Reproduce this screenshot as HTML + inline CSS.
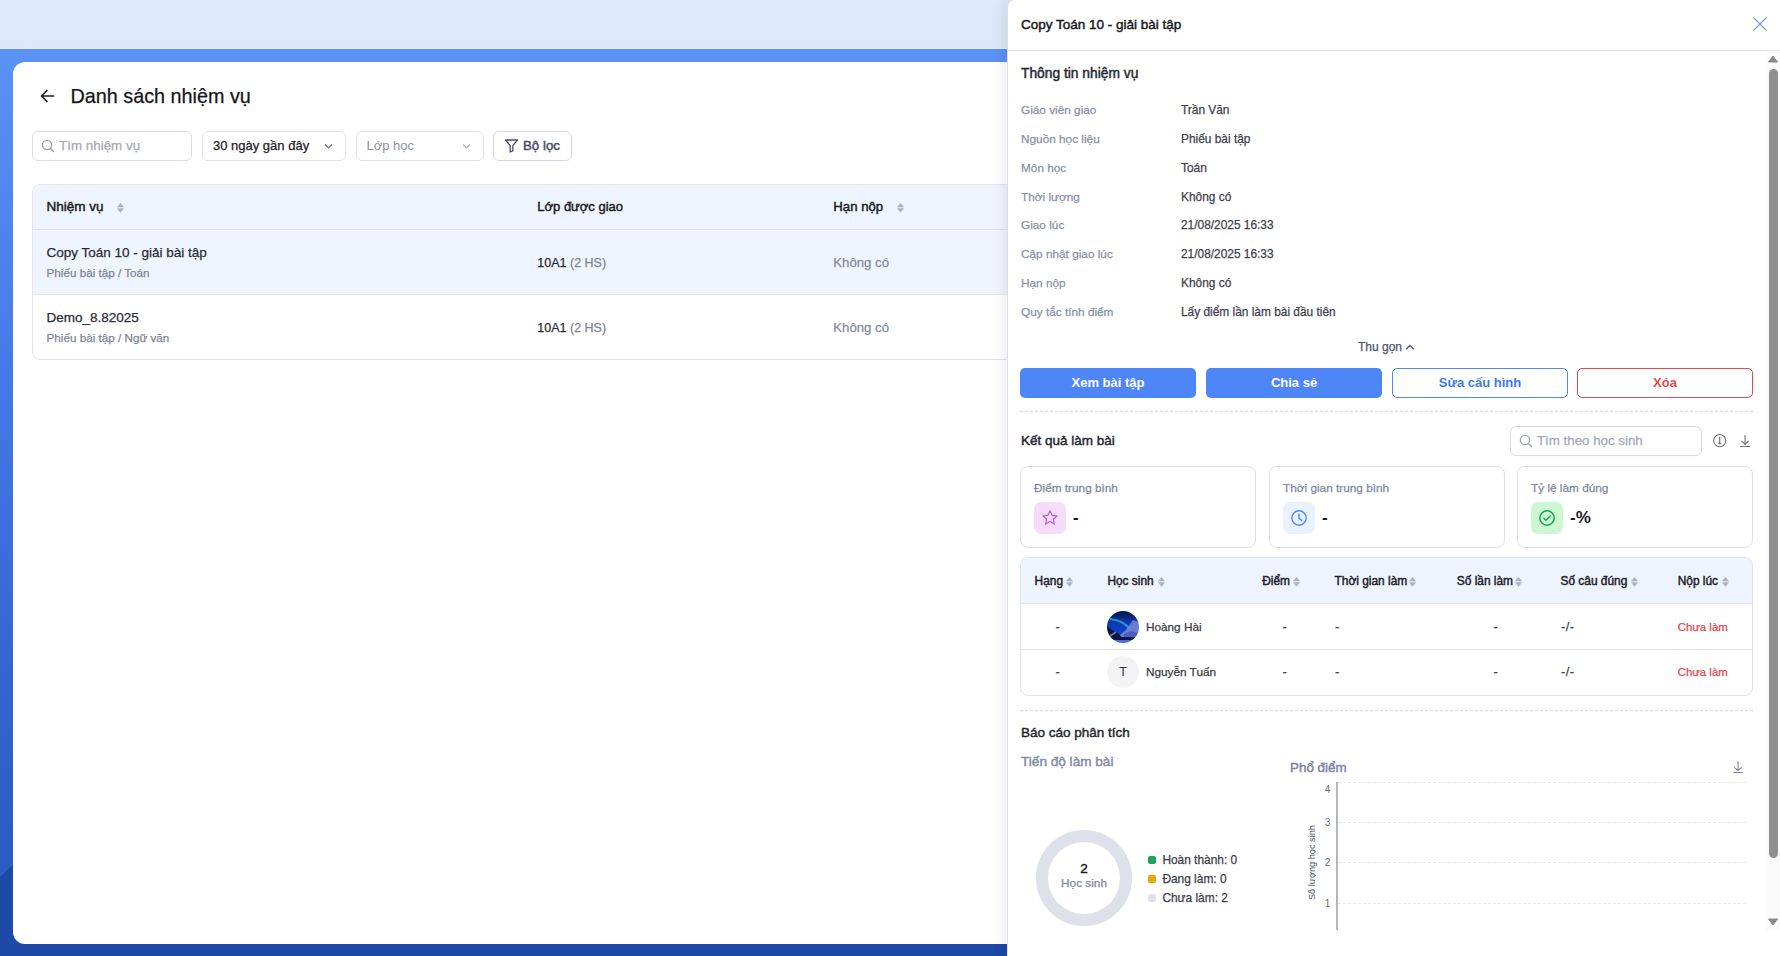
<!DOCTYPE html>
<html><head><meta charset="utf-8">
<style>
*{box-sizing:border-box;margin:0;padding:0}
html,body{width:1780px;height:956px;overflow:hidden;font-family:"Liberation Sans",sans-serif}
body{position:relative;background:#fff}
.abs{position:absolute}
.t{position:absolute;white-space:nowrap;line-height:1}
svg{display:block}
</style></head><body>
<div class="abs" style="left:0px;top:0px;width:1780px;height:49px;background:#dde8fb"></div>
<div class="abs" style="left:0px;top:48px;width:1780px;height:1px;background:#e4ecfb"></div>
<div class="abs" style="left:0px;top:49px;width:1780px;height:907px;background:linear-gradient(180deg,#5b92f6 0%,#4c80ea 25%,#3c6dd8 55%,#2f60c8 80%,#2a58bd 100%)"></div>
<svg class="abs" style="left:0;top:48px" width="1780" height="908"><path d="M0 829 L40 792 L1780 792 L1780 908 L0 908 Z" fill="#1d4aa7"/></svg>
<div class="abs" style="left:0px;top:944px;width:1780px;height:12px;background:#1c48a6"></div>
<div class="abs" style="left:13px;top:62px;width:1754px;height:882px;background:#fff;border-radius:12px"></div>
<svg class="abs" style="left:38px;top:88px" width="18" height="16" viewBox="0 0 18 16"><path d="M15.5 8H3.5M9 2.5L3.5 8L9 13.5" stroke="#1f2026" stroke-width="1.7" fill="none" stroke-linecap="round" stroke-linejoin="round"/></svg>
<div class="t" style="left:70.5px;top:87px;font-size:19.8px;color:#15161a;font-weight:400;-webkit-text-stroke:0.25px currentColor;">Danh sách nhiệm vụ</div>
<div class="abs" style="left:32px;top:131px;width:160px;height:30px;border:1px solid #d9dbe8;border-radius:6px;background:#fff"></div>
<svg class="abs" style="left:41px;top:139px" width="14" height="14" viewBox="0 0 14 14"><circle cx="6" cy="6" r="4.6" stroke="#9a9fb0" stroke-width="1.4" fill="none"/><path d="M9.4 9.4L12.6 12.6" stroke="#9a9fb0" stroke-width="1.4" stroke-linecap="round"/></svg>
<div class="t" style="left:59.0px;top:139px;font-size:13.4px;color:#a6a9b8;font-weight:400;-webkit-text-stroke:0.25px currentColor;">Tìm nhiệm vụ</div>
<div class="abs" style="left:202px;top:131px;width:144px;height:30px;border:1px solid #e2e3ea;border-radius:6px;background:#fff"></div>
<div class="t" style="left:213.0px;top:139px;font-size:13px;color:#1f2026;font-weight:400;-webkit-text-stroke:0.25px currentColor;">30 ngày gần đây</div>
<svg class="abs" style="left:324px;top:142px" width="9" height="8" viewBox="0 0 9 8"><path d="M1 2.5L4.5 6L8 2.5" stroke="#6b6f80" stroke-width="1.1" fill="none"/></svg>
<div class="abs" style="left:356px;top:131px;width:128px;height:30px;border:1px solid #e2e3ea;border-radius:6px;background:#fff"></div>
<div class="t" style="left:366.5px;top:139px;font-size:13px;color:#8d90a0;font-weight:400;">Lớp học</div>
<svg class="abs" style="left:462px;top:142px" width="9" height="8" viewBox="0 0 9 8"><path d="M1 2.5L4.5 6L8 2.5" stroke="#a9acb8" stroke-width="1.1" fill="none"/></svg>
<div class="abs" style="left:493px;top:131px;width:79px;height:30px;border:1px solid #d6d6e8;border-radius:6px;background:#fff"></div>
<svg class="abs" style="left:504px;top:138px" width="15" height="15" viewBox="0 0 15 15"><path d="M1.5 2H13.5L8.8 7.6V12.8L6.2 14V7.6Z" stroke="#4a4e66" stroke-width="1.3" fill="none" stroke-linejoin="round"/></svg>
<div class="t" style="left:523.0px;top:139px;font-size:13.3px;color:#474b66;font-weight:400;-webkit-text-stroke:0.45px currentColor;">Bộ lọc</div>
<div class="abs" style="left:32px;top:184px;width:1740px;height:176px;border:1px solid #e2e4ec;border-radius:8px;background:#fff;overflow:hidden"></div>
<div class="abs" style="left:33px;top:185px;width:1738px;height:44px;background:#eef5fe;border-radius:7px 7px 0 0"></div>
<div class="abs" style="left:33px;top:229px;width:1738px;height:1px;background:#dfe2ea"></div>
<div class="abs" style="left:33px;top:230px;width:1738px;height:64px;background:#eff5fe"></div>
<div class="abs" style="left:33px;top:294px;width:1738px;height:1px;background:#e2e4ec"></div>
<div class="t" style="left:46.5px;top:200px;font-size:13.5px;color:#1a1b22;font-weight:400;-webkit-text-stroke:0.45px currentColor;">Nhiệm vụ</div>
<svg class="abs" style="left:116.5px;top:202.6px" width="7" height="10" viewBox="0 0 7 10"><path d="M3.5 0.3L6.6 4.1H0.4z" fill="#adb3be" stroke="#adb3be" stroke-width="0.5" stroke-linejoin="round"/><path d="M3.5 9.4L6.6 5.6H0.4z" fill="#adb3be" stroke="#adb3be" stroke-width="0.5" stroke-linejoin="round"/></svg>
<div class="t" style="left:537.3px;top:200px;font-size:13px;color:#1a1b22;font-weight:400;-webkit-text-stroke:0.45px currentColor;">Lớp được giao</div>
<div class="t" style="left:833.3px;top:200px;font-size:13.2px;color:#1a1b22;font-weight:400;-webkit-text-stroke:0.45px currentColor;">Hạn nộp</div>
<svg class="abs" style="left:896.5px;top:202.6px" width="7" height="10" viewBox="0 0 7 10"><path d="M3.5 0.3L6.6 4.1H0.4z" fill="#adb3be" stroke="#adb3be" stroke-width="0.5" stroke-linejoin="round"/><path d="M3.5 9.4L6.6 5.6H0.4z" fill="#adb3be" stroke="#adb3be" stroke-width="0.5" stroke-linejoin="round"/></svg>
<div class="t" style="left:46.5px;top:246px;font-size:13.5px;color:#2b2c33;font-weight:400;-webkit-text-stroke:0.25px currentColor;">Copy Toán 10 - giải bài tập</div>
<div class="t" style="left:46.5px;top:267px;font-size:11.7px;color:#80859a;font-weight:400;-webkit-text-stroke:0.25px currentColor;">Phiếu bài tập / Toán</div>
<div class="t" style="left:537.3px;top:257px;font-size:12.5px;color:#2b2c33;font-weight:400;-webkit-text-stroke:0.25px currentColor;">10A1 <span style="color:#7f8398">(2 HS)</span></div>
<div class="t" style="left:833.3px;top:256px;font-size:13.2px;color:#858a9f;font-weight:400;-webkit-text-stroke:0.25px currentColor;">Không có</div>
<div class="t" style="left:46.5px;top:311px;font-size:13.5px;color:#2b2c33;font-weight:400;-webkit-text-stroke:0.25px currentColor;">Demo_8.82025</div>
<div class="t" style="left:46.5px;top:332px;font-size:11.7px;color:#80859a;font-weight:400;-webkit-text-stroke:0.25px currentColor;">Phiếu bài tập / Ngữ văn</div>
<div class="t" style="left:537.3px;top:322px;font-size:12.5px;color:#2b2c33;font-weight:400;-webkit-text-stroke:0.25px currentColor;">10A1 <span style="color:#7f8398">(2 HS)</span></div>
<div class="t" style="left:833.3px;top:321px;font-size:13.2px;color:#858a9f;font-weight:400;-webkit-text-stroke:0.25px currentColor;">Không có</div>
<div class="abs" style="left:1007px;top:0;width:773px;height:956px;background:#fff;border-top-left-radius:8px;border-left:1px solid #dddee8;box-shadow:-5px 0 12px rgba(0,0,0,.065)"></div>
<div class="t" style="left:1021.0px;top:18px;font-size:13.5px;color:#17181d;font-weight:400;-webkit-text-stroke:0.45px currentColor;">Copy Toán 10 - giải bài tập</div>
<svg class="abs" style="left:1752px;top:16px" width="16" height="16" viewBox="0 0 16 16"><path d="M1.5 1.5L14.5 14.5M14.5 1.5L1.5 14.5" stroke="#8298c8" stroke-width="1.15"/></svg>
<div class="abs" style="left:1008px;top:50px;width:772px;height:1px;background:#e1e3ec"></div>
<div class="t" style="left:1021.0px;top:67px;font-size:13.8px;color:#27282e;font-weight:400;-webkit-text-stroke:0.45px currentColor;">Thông tin nhiệm vụ</div>
<div class="t" style="left:1021.0px;top:105px;font-size:11.8px;color:#8a8fa8;font-weight:400;-webkit-text-stroke:0.25px currentColor;">Giáo viên giao</div>
<div class="t" style="left:1181.0px;top:105px;font-size:11.9px;color:#3f414d;font-weight:400;-webkit-text-stroke:0.25px currentColor;">Trần Văn</div>
<div class="t" style="left:1021.0px;top:134px;font-size:11.8px;color:#8a8fa8;font-weight:400;-webkit-text-stroke:0.25px currentColor;">Nguồn học liệu</div>
<div class="t" style="left:1181.0px;top:134px;font-size:11.9px;color:#3f414d;font-weight:400;-webkit-text-stroke:0.25px currentColor;">Phiếu bài tập</div>
<div class="t" style="left:1021.0px;top:163px;font-size:11.8px;color:#8a8fa8;font-weight:400;-webkit-text-stroke:0.25px currentColor;">Môn học</div>
<div class="t" style="left:1181.0px;top:163px;font-size:11.9px;color:#3f414d;font-weight:400;-webkit-text-stroke:0.25px currentColor;">Toán</div>
<div class="t" style="left:1021.0px;top:192px;font-size:11.8px;color:#8a8fa8;font-weight:400;-webkit-text-stroke:0.25px currentColor;">Thời lượng</div>
<div class="t" style="left:1181.0px;top:192px;font-size:11.9px;color:#3f414d;font-weight:400;-webkit-text-stroke:0.25px currentColor;">Không có</div>
<div class="t" style="left:1021.0px;top:220px;font-size:11.8px;color:#8a8fa8;font-weight:400;-webkit-text-stroke:0.25px currentColor;">Giao lúc</div>
<div class="t" style="left:1181.0px;top:220px;font-size:11.9px;color:#3f414d;font-weight:400;-webkit-text-stroke:0.25px currentColor;">21/08/2025 16:33</div>
<div class="t" style="left:1021.0px;top:249px;font-size:11.8px;color:#8a8fa8;font-weight:400;-webkit-text-stroke:0.25px currentColor;">Cập nhật giao lúc</div>
<div class="t" style="left:1181.0px;top:249px;font-size:11.9px;color:#3f414d;font-weight:400;-webkit-text-stroke:0.25px currentColor;">21/08/2025 16:33</div>
<div class="t" style="left:1021.0px;top:278px;font-size:11.8px;color:#8a8fa8;font-weight:400;-webkit-text-stroke:0.25px currentColor;">Hạn nộp</div>
<div class="t" style="left:1181.0px;top:278px;font-size:11.9px;color:#3f414d;font-weight:400;-webkit-text-stroke:0.25px currentColor;">Không có</div>
<div class="t" style="left:1021.0px;top:307px;font-size:11.8px;color:#8a8fa8;font-weight:400;-webkit-text-stroke:0.25px currentColor;">Quy tắc tính điểm</div>
<div class="t" style="left:1181.0px;top:307px;font-size:11.9px;color:#3f414d;font-weight:400;-webkit-text-stroke:0.25px currentColor;">Lấy điểm lần làm bài đầu tiên</div>
<div class="t" style="left:1358.0px;top:341px;font-size:12px;color:#4f5470;font-weight:400;-webkit-text-stroke:0.25px currentColor;">Thu gọn</div>
<svg class="abs" style="left:1405px;top:343px" width="10" height="8" viewBox="0 0 10 8"><path d="M1.2 6.2L5 2.4L8.8 6.2" stroke="#4f5470" stroke-width="1.4" fill="none"/></svg>
<div class="abs" style="left:1020px;top:368px;width:176px;height:30px;background:#4f86f7;border-radius:5px"></div>
<div class="abs" style="left:1206px;top:368px;width:176px;height:30px;background:#4f86f7;border-radius:5px"></div>
<div class="abs" style="left:1392px;top:368px;width:176px;height:30px;border:1px solid #4f86f7;border-radius:5px;background:#fff"></div>
<div class="abs" style="left:1577px;top:368px;width:176px;height:30px;border:1px solid #e5484d;border-radius:5px;background:#fff"></div>
<div class="t" style="left:808.0px;width:600px;text-align:center;top:376px;font-size:13px;color:#fff;font-weight:700;">Xem bài tập</div>
<div class="t" style="left:994.0px;width:600px;text-align:center;top:376px;font-size:13px;color:#fff;font-weight:700;">Chia sẻ</div>
<div class="t" style="left:1180.0px;width:600px;text-align:center;top:376px;font-size:13px;color:#3b78f0;font-weight:700;">Sửa cấu hình</div>
<div class="t" style="left:1365.0px;width:600px;text-align:center;top:376px;font-size:13px;color:#e5484d;font-weight:700;">Xóa</div>
<svg class="abs" style="left:1020px;top:410px" width="733" height="3"><line x1="0" y1="1.5" x2="733" y2="1.5" stroke="#dcdfe8" stroke-width="1.5" stroke-dasharray="3 2"/></svg>
<div class="t" style="left:1021.0px;top:434px;font-size:13.5px;color:#27282e;font-weight:400;-webkit-text-stroke:0.45px currentColor;">Kết quả làm bài</div>
<div class="abs" style="left:1510px;top:426px;width:192px;height:30px;border:1px solid #d8d9e8;border-radius:6px;background:#fff"></div>
<svg class="abs" style="left:1519px;top:434px" width="14" height="14" viewBox="0 0 14 14"><circle cx="6" cy="6" r="4.6" stroke="#a1a6b8" stroke-width="1.4" fill="none"/><path d="M9.4 9.4L12.6 12.6" stroke="#a1a6b8" stroke-width="1.4" stroke-linecap="round"/></svg>
<div class="t" style="left:1537.0px;top:434px;font-size:13.3px;color:#a4a8ba;font-weight:400;-webkit-text-stroke:0.25px currentColor;">Tìm theo học sinh</div>
<svg class="abs" style="left:1712px;top:433px" width="16" height="16" viewBox="0 0 16 16"><circle cx="7.7" cy="7.6" r="6.1" stroke="#6e6e72" stroke-width="1.05" fill="none"/><path d="M7.7 4.6V10.4M6.4 10.6H9.2" stroke="#6e6e72" stroke-width="1.1"/><circle cx="7.7" cy="4.6" r="0.8" fill="#6e6e72"/></svg>
<svg class="abs" style="left:1739px;top:434px" width="12" height="14" viewBox="0 0 12 14"><path d="M6 1V10.3M2.4 6.9L6 10.4L9.6 6.9M1.1 12.5H10.9" stroke="#707074" stroke-width="1.05" fill="none"/></svg>
<div class="abs" style="left:1020px;top:466px;width:236px;height:82px;border:1px solid #dfe1ea;border-radius:8px;background:#fff"></div>
<div class="t" style="left:1034.0px;top:483px;font-size:11.8px;color:#80869e;font-weight:400;-webkit-text-stroke:0.25px currentColor;">Điểm trung bình</div>
<div class="abs" style="left:1034px;top:502px;width:32px;height:32px;background:#f6dcfa;border-radius:7px"></div>
<svg class="abs" style="left:1041px;top:509px" width="18" height="18" viewBox="0 0 18 18"><path d="M9 1.8L11.1 6.3L16 6.9L12.4 10.2L13.4 15.1L9 12.6L4.6 15.1L5.6 10.2L2 6.9L6.9 6.3Z" stroke="#b061d6" stroke-width="1.2" fill="none" stroke-linejoin="round"/></svg>
<div class="t" style="left:1073.0px;top:509px;font-size:17px;color:#17181d;font-weight:700;">-</div>
<div class="abs" style="left:1269px;top:466px;width:236px;height:82px;border:1px solid #dfe1ea;border-radius:8px;background:#fff"></div>
<div class="t" style="left:1283.0px;top:483px;font-size:11.8px;color:#80869e;font-weight:400;-webkit-text-stroke:0.25px currentColor;">Thời gian trung bình</div>
<div class="abs" style="left:1283px;top:502px;width:32px;height:32px;background:#e9f2fe;border-radius:7px"></div>
<svg class="abs" style="left:1290px;top:509px" width="18" height="18" viewBox="0 0 18 18"><circle cx="9" cy="9" r="7.2" stroke="#4a8af4" stroke-width="1.4" fill="none"/><path d="M9 5V9.2L11.6 11.4" stroke="#4a8af4" stroke-width="1.4" fill="none" stroke-linecap="round"/></svg>
<div class="t" style="left:1322.0px;top:509px;font-size:17px;color:#17181d;font-weight:700;">-</div>
<div class="abs" style="left:1517px;top:466px;width:236px;height:82px;border:1px solid #dfe1ea;border-radius:8px;background:#fff"></div>
<div class="t" style="left:1531.0px;top:483px;font-size:11.8px;color:#80869e;font-weight:400;-webkit-text-stroke:0.25px currentColor;">Tỷ lệ làm đúng</div>
<div class="abs" style="left:1531px;top:502px;width:32px;height:32px;background:#cdf7d2;border-radius:7px"></div>
<svg class="abs" style="left:1538px;top:509px" width="18" height="18" viewBox="0 0 18 18"><circle cx="9" cy="9" r="7.2" stroke="#16a34a" stroke-width="1.5" fill="none"/><path d="M5.8 9.2L8 11.3L12.2 7" stroke="#16a34a" stroke-width="1.5" fill="none" stroke-linecap="round" stroke-linejoin="round"/></svg>
<div class="t" style="left:1570.0px;top:509px;font-size:17px;color:#17181d;font-weight:700;">-%</div>
<div class="abs" style="left:1020px;top:557px;width:733px;height:139px;border:1px solid #e0e3ec;border-radius:8px;background:#fff"></div>
<div class="abs" style="left:1021px;top:558px;width:731px;height:45px;background:#edf4fe;border-radius:7px 7px 0 0"></div>
<div class="abs" style="left:1021px;top:603px;width:731px;height:1px;background:#dfe2ec"></div>
<div class="abs" style="left:1021px;top:649px;width:731px;height:1px;background:#e3e5ee"></div>
<div class="t" style="left:1034.6px;top:576px;font-size:11.9px;color:#1f2028;font-weight:400;-webkit-text-stroke:0.45px currentColor;">Hạng</div>
<svg class="abs" style="left:1066px;top:577px" width="7" height="10" viewBox="0 0 7 10"><path d="M3.5 0.3L6.6 4.1H0.4z" fill="#adb3be" stroke="#adb3be" stroke-width="0.5" stroke-linejoin="round"/><path d="M3.5 9.4L6.6 5.6H0.4z" fill="#adb3be" stroke="#adb3be" stroke-width="0.5" stroke-linejoin="round"/></svg>
<div class="t" style="left:1107.4px;top:576px;font-size:11.9px;color:#1f2028;font-weight:400;-webkit-text-stroke:0.45px currentColor;">Học sinh</div>
<svg class="abs" style="left:1158px;top:577px" width="7" height="10" viewBox="0 0 7 10"><path d="M3.5 0.3L6.6 4.1H0.4z" fill="#adb3be" stroke="#adb3be" stroke-width="0.5" stroke-linejoin="round"/><path d="M3.5 9.4L6.6 5.6H0.4z" fill="#adb3be" stroke="#adb3be" stroke-width="0.5" stroke-linejoin="round"/></svg>
<div class="t" style="left:1262.2px;top:576px;font-size:11.9px;color:#1f2028;font-weight:400;-webkit-text-stroke:0.45px currentColor;">Điểm</div>
<svg class="abs" style="left:1293px;top:577px" width="7" height="10" viewBox="0 0 7 10"><path d="M3.5 0.3L6.6 4.1H0.4z" fill="#adb3be" stroke="#adb3be" stroke-width="0.5" stroke-linejoin="round"/><path d="M3.5 9.4L6.6 5.6H0.4z" fill="#adb3be" stroke="#adb3be" stroke-width="0.5" stroke-linejoin="round"/></svg>
<div class="t" style="left:1334.6px;top:576px;font-size:11.9px;color:#1f2028;font-weight:400;-webkit-text-stroke:0.45px currentColor;">Thời gian làm</div>
<svg class="abs" style="left:1409px;top:577px" width="7" height="10" viewBox="0 0 7 10"><path d="M3.5 0.3L6.6 4.1H0.4z" fill="#adb3be" stroke="#adb3be" stroke-width="0.5" stroke-linejoin="round"/><path d="M3.5 9.4L6.6 5.6H0.4z" fill="#adb3be" stroke="#adb3be" stroke-width="0.5" stroke-linejoin="round"/></svg>
<div class="t" style="left:1456.8px;top:576px;font-size:11.9px;color:#1f2028;font-weight:400;-webkit-text-stroke:0.45px currentColor;">Số lần làm</div>
<svg class="abs" style="left:1515px;top:577px" width="7" height="10" viewBox="0 0 7 10"><path d="M3.5 0.3L6.6 4.1H0.4z" fill="#adb3be" stroke="#adb3be" stroke-width="0.5" stroke-linejoin="round"/><path d="M3.5 9.4L6.6 5.6H0.4z" fill="#adb3be" stroke="#adb3be" stroke-width="0.5" stroke-linejoin="round"/></svg>
<div class="t" style="left:1560.5px;top:576px;font-size:11.9px;color:#1f2028;font-weight:400;-webkit-text-stroke:0.45px currentColor;">Số câu đúng</div>
<svg class="abs" style="left:1631px;top:577px" width="7" height="10" viewBox="0 0 7 10"><path d="M3.5 0.3L6.6 4.1H0.4z" fill="#adb3be" stroke="#adb3be" stroke-width="0.5" stroke-linejoin="round"/><path d="M3.5 9.4L6.6 5.6H0.4z" fill="#adb3be" stroke="#adb3be" stroke-width="0.5" stroke-linejoin="round"/></svg>
<div class="t" style="left:1677.7px;top:576px;font-size:11.9px;color:#1f2028;font-weight:400;-webkit-text-stroke:0.45px currentColor;">Nộp lúc</div>
<svg class="abs" style="left:1722px;top:577px" width="7" height="10" viewBox="0 0 7 10"><path d="M3.5 0.3L6.6 4.1H0.4z" fill="#adb3be" stroke="#adb3be" stroke-width="0.5" stroke-linejoin="round"/><path d="M3.5 9.4L6.6 5.6H0.4z" fill="#adb3be" stroke="#adb3be" stroke-width="0.5" stroke-linejoin="round"/></svg>
<div class="t" style="left:757.7px;width:600px;text-align:center;top:620px;font-size:13px;color:#3d3f4b;font-weight:400;-webkit-text-stroke:0.25px currentColor;">-</div>
<svg class="abs" style="left:1107px;top:611px" width="32" height="32" viewBox="0 0 32 32"><defs><clipPath id="avc"><circle cx="16" cy="16" r="16"/></clipPath><linearGradient id="sky" x1="0" y1="0" x2="0" y2="1"><stop offset="0" stop-color="#041446"/><stop offset=".4" stop-color="#0a3bb8"/><stop offset=".75" stop-color="#0f45c4"/><stop offset="1" stop-color="#0a2a80"/></linearGradient></defs><filter id="avb"><feGaussianBlur stdDeviation="0.6"/></filter><g clip-path="url(#avc)"><g filter="url(#avb)"><rect width="32" height="32" fill="url(#sky)"/><path d="M3 8Q15 9 22 17" stroke="#34c6dc" stroke-width="2.2" fill="none" opacity=".65"/><path d="M13 24L19 19L26 9L32 11V27H13Z" fill="#8a92dc" opacity=".75"/><path d="M17 23L24 20L32 22V27H17Z" fill="#4a55b8" opacity=".8"/><path d="M0 15L5 19L11 22L15 27V32H0Z" fill="#10163a"/><path d="M3 25L9 21" stroke="#9aa4e8" stroke-width="1.6" opacity=".7"/><rect y="26" width="32" height="3" fill="#0a1850"/><rect y="29" width="32" height="3" fill="#4d6ad8"/></g></g></svg>
<div class="t" style="left:1145.9px;top:622px;font-size:11.8px;color:#3a3b45;font-weight:400;-webkit-text-stroke:0.25px currentColor;">Hoàng Hài</div>
<div class="t" style="left:984.6px;width:600px;text-align:center;top:620px;font-size:13px;color:#3d3f4b;font-weight:400;-webkit-text-stroke:0.25px currentColor;">-</div>
<div class="t" style="left:1335.0px;top:620px;font-size:13px;color:#3d3f4b;font-weight:400;-webkit-text-stroke:0.25px currentColor;">-</div>
<div class="t" style="left:1195.6px;width:600px;text-align:center;top:620px;font-size:13px;color:#3d3f4b;font-weight:400;-webkit-text-stroke:0.25px currentColor;">-</div>
<div class="t" style="left:1561.0px;top:621px;font-size:12.5px;color:#3d3f4b;font-weight:400;-webkit-text-stroke:0.25px currentColor;letter-spacing:0.6px;">-/-</div>
<div class="t" style="left:1677.7px;top:622px;font-size:11.4px;color:#e0474c;font-weight:400;-webkit-text-stroke:0.25px currentColor;">Chưa làm</div>
<div class="t" style="left:757.7px;width:600px;text-align:center;top:665px;font-size:13px;color:#3d3f4b;font-weight:400;-webkit-text-stroke:0.25px currentColor;">-</div>
<div class="abs" style="left:1107px;top:656px;width:32px;height:32px;background:#f3f3f5;border-radius:50%"></div>
<div class="t" style="left:823.0px;width:600px;text-align:center;top:666px;font-size:12.5px;color:#2f3038;font-weight:400;">T</div>
<div class="t" style="left:1145.9px;top:667px;font-size:11.8px;color:#3a3b45;font-weight:400;-webkit-text-stroke:0.25px currentColor;">Nguyễn Tuấn</div>
<div class="t" style="left:984.6px;width:600px;text-align:center;top:665px;font-size:13px;color:#3d3f4b;font-weight:400;-webkit-text-stroke:0.25px currentColor;">-</div>
<div class="t" style="left:1335.0px;top:665px;font-size:13px;color:#3d3f4b;font-weight:400;-webkit-text-stroke:0.25px currentColor;">-</div>
<div class="t" style="left:1195.6px;width:600px;text-align:center;top:665px;font-size:13px;color:#3d3f4b;font-weight:400;-webkit-text-stroke:0.25px currentColor;">-</div>
<div class="t" style="left:1561.0px;top:666px;font-size:12.5px;color:#3d3f4b;font-weight:400;-webkit-text-stroke:0.25px currentColor;letter-spacing:0.6px;">-/-</div>
<div class="t" style="left:1677.7px;top:667px;font-size:11.4px;color:#e0474c;font-weight:400;-webkit-text-stroke:0.25px currentColor;">Chưa làm</div>
<svg class="abs" style="left:1020px;top:709px" width="733" height="3"><line x1="0" y1="1.5" x2="733" y2="1.5" stroke="#dcdfe8" stroke-width="1.5" stroke-dasharray="3 2"/></svg>
<div class="t" style="left:1021.0px;top:726px;font-size:13.5px;color:#27282e;font-weight:400;-webkit-text-stroke:0.45px currentColor;">Báo cáo phân tích</div>
<div class="t" style="left:1021.0px;top:755px;font-size:13.6px;color:#858aa6;font-weight:400;-webkit-text-stroke:0.45px currentColor;">Tiến độ làm bài</div>
<div class="t" style="left:1290.0px;top:761px;font-size:13.4px;color:#7d83a6;font-weight:400;-webkit-text-stroke:0.45px currentColor;">Phổ điểm</div>
<svg class="abs" style="left:1731px;top:760px" width="14" height="14" viewBox="0 0 14 14"><path d="M7 1.2V10.6M3.2 7.3L7 10.5L10.8 7.3M2.3 12.5H11.7" stroke="#7b8198" stroke-width="1.05" fill="none"/></svg>
<svg class="abs" style="left:1036px;top:830px" width="96" height="96" viewBox="0 0 96 96"><circle cx="48" cy="48" r="42" stroke="#dfe1ea" stroke-width="12" fill="none"/></svg>
<div class="t" style="left:784.0px;width:600px;text-align:center;top:862px;font-size:13.5px;color:#1f2026;font-weight:400;-webkit-text-stroke:0.45px currentColor;">2</div>
<div class="t" style="left:784.0px;width:600px;text-align:center;top:878px;font-size:11.8px;color:#8086a3;font-weight:400;-webkit-text-stroke:0.25px currentColor;">Học sinh</div>
<div class="abs" style="left:1148px;top:856px;width:8px;height:8px;background:#1fa35a;border-radius:2px"></div>
<div class="t" style="left:1162.4px;top:855px;font-size:11.9px;color:#3b3c48;font-weight:400;-webkit-text-stroke:0.25px currentColor;">Hoàn thành: 0</div>
<div class="abs" style="left:1148px;top:875px;width:8px;height:8px;background:#e9a70e;border-radius:2px"></div>
<div class="t" style="left:1162.4px;top:874px;font-size:11.9px;color:#3b3c48;font-weight:400;-webkit-text-stroke:0.25px currentColor;">Đang làm: 0</div>
<div class="abs" style="left:1148px;top:894px;width:8px;height:8px;background:#e1e3ea;border-radius:2px"></div>
<div class="t" style="left:1162.4px;top:893px;font-size:11.9px;color:#3b3c48;font-weight:400;-webkit-text-stroke:0.25px currentColor;">Chưa làm: 2</div>
<svg class="abs" style="left:1338px;top:782px" width="410" height="1"><line x1="0" y1="0.5" x2="410" y2="0.5" stroke="#e6e8ef" stroke-width="1" stroke-dasharray="3 2"/></svg>
<svg class="abs" style="left:1338px;top:822px" width="410" height="1"><line x1="0" y1="0.5" x2="410" y2="0.5" stroke="#e6e8ef" stroke-width="1" stroke-dasharray="3 2"/></svg>
<svg class="abs" style="left:1338px;top:862px" width="410" height="1"><line x1="0" y1="0.5" x2="410" y2="0.5" stroke="#e6e8ef" stroke-width="1" stroke-dasharray="3 2"/></svg>
<svg class="abs" style="left:1338px;top:903px" width="410" height="1"><line x1="0" y1="0.5" x2="410" y2="0.5" stroke="#e6e8ef" stroke-width="1" stroke-dasharray="3 2"/></svg>
<div class="abs" style="left:1336px;top:782px;width:2px;height:148px;background:#b5b5b8"></div>
<div class="t" style="left:1027.5px;width:600px;text-align:center;top:785px;font-size:10px;color:#6a6d7a;font-weight:400;">4</div>
<div class="t" style="left:1027.5px;width:600px;text-align:center;top:818px;font-size:10px;color:#6a6d7a;font-weight:400;">3</div>
<div class="t" style="left:1027.5px;width:600px;text-align:center;top:858px;font-size:10px;color:#6a6d7a;font-weight:400;">2</div>
<div class="t" style="left:1027.5px;width:600px;text-align:center;top:899px;font-size:10px;color:#6a6d7a;font-weight:400;">1</div>
<div class="t" style="left:1275px;top:858px;width:76px;text-align:center;font-size:9.2px;color:#4d5060;transform:rotate(-90deg);transform-origin:center center">Số lượng học sinh</div>
<div class="abs" style="left:1766px;top:51px;width:14px;height:879px;background:#fafafa"></div>
<svg class="abs" style="left:1768px;top:55px" width="10" height="8" viewBox="0 0 10 8"><path d="M5 1L9.5 7H0.5Z" fill="#8a8a8a" stroke="#8a8a8a" stroke-linejoin="round" stroke-width="1"/></svg>
<div class="abs" style="left:1769px;top:69px;width:9px;height:789px;background:#8f8f8f;border-radius:5px"></div>
<svg class="abs" style="left:1768px;top:918px" width="10" height="8" viewBox="0 0 10 8"><path d="M5 7L9.5 1H0.5Z" fill="#8a8a8a" stroke="#8a8a8a" stroke-linejoin="round" stroke-width="1"/></svg>
</body></html>
